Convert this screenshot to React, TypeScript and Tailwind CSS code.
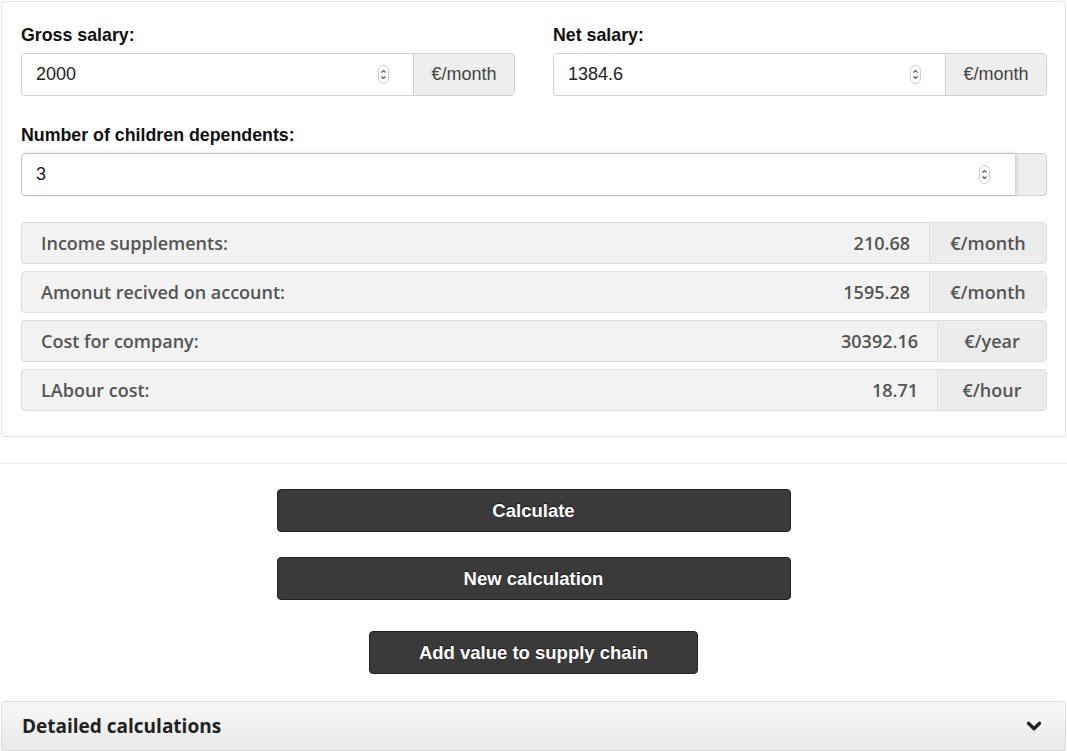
import { ChevronDown } from 'lucide-react'

const helv = { fontFamily: '"Liberation Sans", Arial, sans-serif' }
const open = { fontFamily: '"Open Sans", "Liberation Sans", sans-serif' }

function Spinner() {
  return (
    <svg width="11" height="19" viewBox="0 0 11 19" className="shrink-0">
      <rect x="0.5" y="0.5" width="10" height="18" rx="5" fill="#fff" stroke="#cfcfcf" />
      <path d="M3.5 7.5 L5.5 5.5 L7.5 7.5" fill="none" stroke="#555" strokeWidth="1.1" />
      <path d="M3.5 11.5 L5.5 13.5 L7.5 11.5" fill="none" stroke="#555" strokeWidth="1.1" />
    </svg>
  )
}

function SalaryField({ label, value }: { label: string; value: string }) {
  return (
    <div className="flex-1">
      <div className="text-[17.8px] font-bold leading-5 text-[#111] mb-2" style={helv}>
        {label}
      </div>
      <div className="flex h-[43px] rounded-[4px] border border-[#d0d0d0] overflow-hidden" style={helv}>
        <div className="flex flex-1 items-center bg-white pl-[14px] pr-[24px] text-[18px] text-[#222]">
          <span className="flex-1">{value}</span>
          <Spinner />
        </div>
        <div className="flex w-[101px] items-center justify-center border-l border-[#d0d0d0] bg-[#eeeeee] text-[18px] text-[#444]">
          €/month
        </div>
      </div>
    </div>
  )
}

const results = [
  { label: 'Income supplements:', value: '210.68', unit: '€/month', w: 'w-[117px]' },
  { label: 'Amonut recived on account:', value: '1595.28', unit: '€/month', w: 'w-[117px]' },
  { label: 'Cost for company:', value: '30392.16', unit: '€/year', w: 'w-[109px]' },
  { label: 'LAbour cost:', value: '18.71', unit: '€/hour', w: 'w-[109px]' },
]

const btn =
  'h-[43px] rounded-[4px] border border-[#222] bg-[#3a3a3a] text-[18.5px] font-bold text-white [text-shadow:0_-1px_1px_rgba(0,0,0,0.6)]'

export default function App() {
  return (
    <div className="w-[1067px] h-[751px] bg-white overflow-hidden">
      <div className="pt-[1px] px-[1px]">
        <div className="rounded-[4px] border border-[#e3e3e3] bg-white pl-[19px] pr-[18px] pt-[23px] pb-[25px]">
          <div className="flex gap-[38px]">
            <SalaryField label="Gross salary:" value="2000" />
            <SalaryField label="Net salary:" value="1384.6" />
          </div>

          <div className="mt-[29px] text-[17.8px] font-bold leading-5 text-[#111] mb-2" style={helv}>
            Number of children dependents:
          </div>
          <div className="flex h-[43px] rounded-[4px] border border-[#d0d0d0] bg-[#eeeeee]" style={helv}>
            <div className="flex flex-1 items-center rounded-l-[4px] bg-white pl-[14px] pr-[25px] text-[18px] text-[#222] shadow-[1px_0_4px_rgba(0,0,0,0.18)]">
              <span className="flex-1">3</span>
              <Spinner />
            </div>
            <div className="w-[31px]" />
          </div>

          <div className="mt-[26px] flex flex-col gap-[7px]" style={open}>
            {results.map((r) => (
              <div
                key={r.label}
                className="flex h-[42px] rounded-[4px] border border-[#dcdcdc] bg-[#f2f2f2] text-[18px] font-semibold text-[#555]"
              >
                <div className="flex flex-1 items-center pl-[19px]">{r.label}</div>
                <div className="flex items-center pr-[19px]">{r.value}</div>
                <div className={`flex ${r.w} items-center justify-center border-l border-[#e0e0e0] bg-[#ececec]`}>
                  {r.unit}
                </div>
              </div>
            ))}
          </div>
        </div>
      </div>

      <div className="mt-[26px] border-t border-[#ececec]" />

      <div className="flex flex-col items-center pt-[25px]" style={helv}>
        <button className={`${btn} w-[514px]`}>Calculate</button>
        <button className={`${btn} mt-[25px] w-[514px]`}>New calculation</button>
        <button className={`${btn} mt-[31px] w-[329px]`}>Add value to supply chain</button>
      </div>

      <div className="mt-[27px] px-[1px]">
        <div
          className="flex h-[50px] items-center justify-between rounded-t-[4px] border border-[#dedede] bg-gradient-to-b from-[#f7f7f7] to-[#e9e9e9] pl-[20px] pr-[20px]"
          style={open}
        >
          <span className="text-[19px] font-bold text-[#222]">Detailed calculations</span>
          <ChevronDown className="h-[22px] w-[22px] text-[#222]" strokeWidth={3.5} />
        </div>
      </div>
    </div>
  )
}
